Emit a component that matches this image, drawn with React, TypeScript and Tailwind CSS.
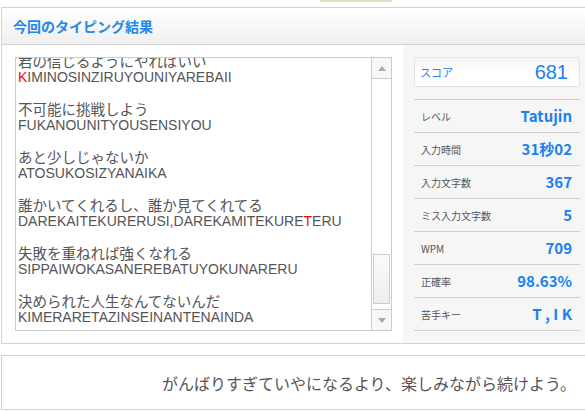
import React from "react";

const JP = { fontFamily: '"Noto Sans CJK JP", "Noto Sans", sans-serif' };

type Line = { jp: string; ro: React.ReactNode };

const lines: Line[] = [
  { jp: "君の信じるようにやればいい", ro: <><span className="text-[#ff0000]">K</span>IMINOSINZIRUYOUNIYAREBAII</> },
  { jp: "不可能に挑戦しよう", ro: "FUKANOUNITYOUSENSIYOU" },
  { jp: "あと少しじゃないか", ro: "ATOSUKOSIZYANAIKA" },
  {
    jp: "誰かいてくれるし、誰か見てくれてる",
    ro: <>DAREKAITEKURERUSI<span className="text-[#ff0000]">,</span>DAREKAMITEKURE<span className="text-[#ff0000]">T</span>ERU</>,
  },
  { jp: "失敗を重ねれば強くなれる", ro: "SIPPAIWOKASANEREBATUYOKUNARERU" },
  { jp: "決められた人生なんてないんだ", ro: "KIMERARETAZINSEINANTENAINDA" },
];

const stats = [
  { label: "レベル", value: "Tatujin" },
  { label: "入力時間", value: "31秒02" },
  { label: "入力文字数", value: "367" },
  { label: "ミス入力文字数", value: "5" },
  { label: "WPM", value: "709" },
  { label: "正確率", value: "98.63%" },
  { label: "苦手キー", value: "T , I K" },
];

export default function App() {
  return (
    <div className="w-[585px] h-[412px] overflow-hidden bg-white" style={JP}>
      <div className="h-[7px]">
        <div className="ml-[320px] w-[72px] h-[2px] bg-[#e6dcc0]" />
      </div>

      <div className="ml-[1px] w-[600px] border border-r-0 border-[#d4d4d4]">
        <div className="h-[37px] flex items-center pl-[11px] bg-gradient-to-b from-white to-[#efefef] border-b border-[#d0d0d0]">
          <h2 className="text-[14px] font-bold text-[#2289e6]">今回のタイピング結果</h2>
        </div>

        <div className="flex h-[298px]">
          <div className="w-[401px] pl-[13px] pt-[12px] bg-white">
            <div className="w-[377px] h-[274px] border border-[#cccccc] flex overflow-hidden">
              <div className="flex-1 overflow-hidden pl-[2px]">
                <div className="mt-[-5px] text-[#555] leading-[16px]">
                  {lines.map((l, i) => (
                    <div key={i} className="h-[48px]">
                      <div className="text-[14.5px] whitespace-nowrap">{l.jp}</div>
                      <div className="text-[14px] whitespace-nowrap" style={{ fontFamily: '"Liberation Sans", sans-serif' }}>{l.ro}</div>
                    </div>
                  ))}
                </div>
              </div>
              <div className="w-[20px] border-l border-[#cccccc] flex flex-col bg-white">
                <div className="h-[21px] border-b border-[#cccccc] flex items-center justify-center bg-[#f7f7f7]">
                  <svg width="8" height="5" viewBox="0 0 8 5"><path d="M0 5 L4 0 L8 5 Z" fill="#aaaaaa" /></svg>
                </div>
                <div className="flex-1 flex flex-col justify-end px-[1px] pb-[5px]">
                  <div className="h-[50px] border border-[#cccccc] bg-gradient-to-b from-[#fafafa] to-[#eeeeee]" />
                </div>
                <div className="h-[21px] border-t border-[#cccccc] flex items-center justify-center bg-[#f7f7f7]">
                  <svg width="8" height="5" viewBox="0 0 8 5"><path d="M0 0 L8 0 L4 5 Z" fill="#aaaaaa" /></svg>
                </div>
              </div>
            </div>
          </div>

          <div className="w-[183px] bg-[#f6f6f6] pl-[11px] pr-[6px] pt-[12px]">
            <div className="h-[30px] w-[166px] rounded-[3px] border border-[#e2e2e2] bg-gradient-to-b from-[#f4f4f4] via-white to-white flex items-center justify-between pl-[5px] pr-[11px]">
              <span className="text-[11px] text-[#1a82f0]">スコア</span>
              <span className="text-[20px] leading-none text-[#1a82f0]" style={{ fontFamily: '"Liberation Sans", sans-serif' }}>681</span>
            </div>
            <div className="mt-[12px] w-[166px] border-t border-[#d0d0d0]">
              {stats.map((s) => (
                <div key={s.label} className="h-[33px] border-b border-[#d0d0d0] flex items-center justify-between pl-[7px] pr-[8px]">
                  <span className="text-[10px] text-[#555]">{s.label}</span>
                  <span className="text-[15px] font-bold text-[#1a82f0]">{s.value}</span>
                </div>
              ))}
            </div>
          </div>
        </div>
      </div>

      <div className="mt-[11px] ml-[1px] w-[600px] h-[55px] border border-r-0 border-[#d0d0d0] flex items-center">
        <p className="w-[574px] text-right text-[16px] text-[#555]">がんばりすぎていやになるより、楽しみながら続けよう。</p>
      </div>
    </div>
  );
}
